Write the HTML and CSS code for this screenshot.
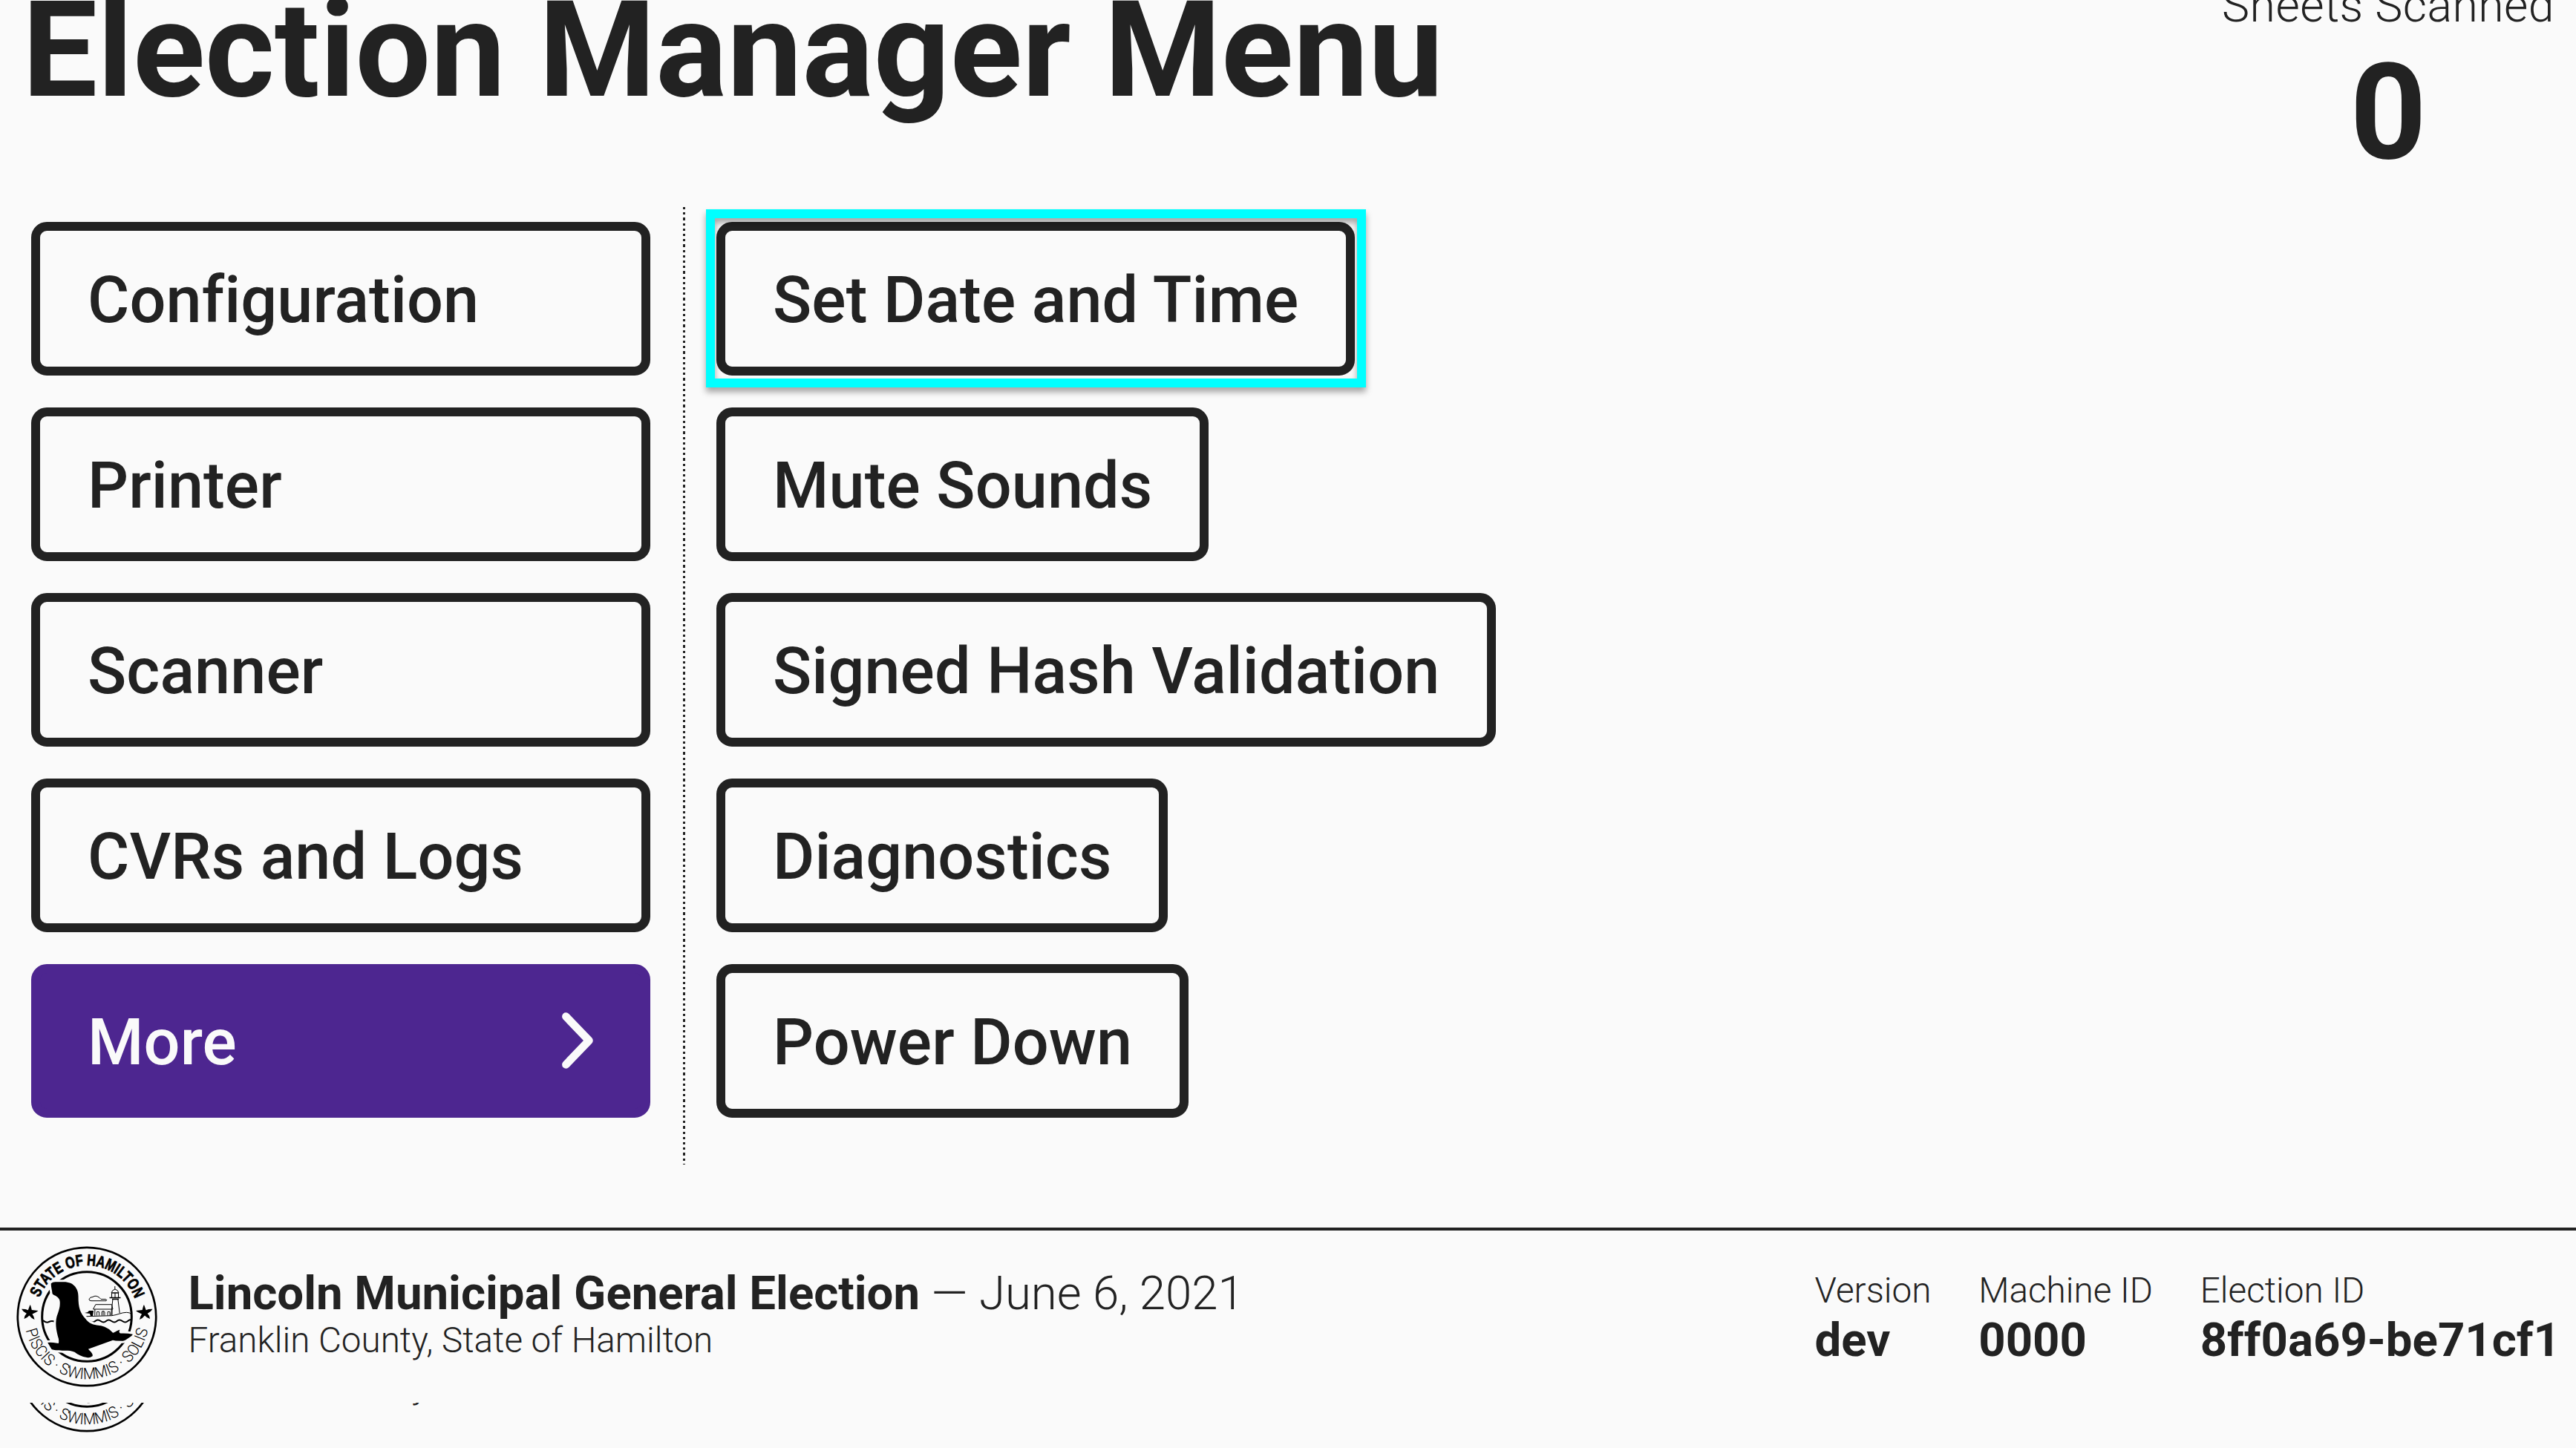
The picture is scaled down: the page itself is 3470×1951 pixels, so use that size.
FILE: index.html
```html
<!DOCTYPE html>
<html lang="en">
<head>
<meta charset="utf-8">
<title>Election Manager Menu</title>
<link rel="stylesheet" href="styles.css">
</head>
<body>
<svg class="defs" width="0" height="0" aria-hidden="true">
  <symbol id="seal" viewBox="0 0 190 190">
    <defs>
      <path id="arc-top" d="M26 95a69 69 0 0 1 138 0"/>
      <path id="arc-bottom" d="M10.700 95a84.300 84.300 0 0 0 168.600 0"/>
    </defs>
    <g fill="none" stroke="#000">
      <circle cx="95" cy="95" r="93.200" stroke-width="2.700"/>
      <circle cx="95" cy="95" r="60.300" stroke-width="3"/>
      <path stroke-width="2" d="M36 100q4 4 8 2t8 0 8 0M90 100q5-2 9 1t7.300 0 7.300 0 7.300 0 7.300 0 7.300 0 7.300 0 7.300 0 5-1"/>
      <path stroke-width="1" d="M91 95l8-.500 29.500-.800c8-1 13-4.400 20-4.400q4 0 7 2.400M98 71.500q1-3 5-3 4-3 9 1l2 2h6q3 1 1 2.200h-20q-3 0-3-2.200zM103.500 85l3.300-6.300h21.700l1.500 6.300zM105.800 85v8.700M129 85v8.700M130 71l-2.500 22M136.800 71l2.400 19.300M128.500 69v-6h9v6M133 69v-6M128 63q1-4 5-5 4 1 5 5zM132.800 58v-4"/>
      <path stroke-width="1.500" d="M125.500 69.600h15M129 71.500h9"/>
      <path stroke-width=".9" d="M108.500 93.500v-5h3v5M115 93.500v-5q2-2 4 0v5M117 93.500v-6M123 93.500v-5h3v5"/>
      <path fill="#000" stroke="none" d="M92 90l4-1 2-2 6 0-1 7h-3l-1-3z"/>
    </g>
    <path stroke="#fafafa" stroke-width="6" paint-order="stroke" d="M46.800 50.300Q49 48 53.500 48.300L60 48.300C70 47.500 75 50 78.500 53.700 82 58 83.500 62 83.500 68 83.500 83 86 90 93.500 98.300 99 106 108 106.500 111.800 107 118 107.500 125 111 130 116.700 134 116 136 113 139.500 112.700 138 115 138.500 117 140.500 117.500Q149 117 156.800 118.700C156 121 153 122.500 152 123.300 148 126 146 127.700 143.500 127.700L134 127.500 130 126.700 96.800 138.700C99 141 104 145 102.500 148.300Q99 151 95 150C88 149 83 146 78.500 142.700 71 139.500 65 141.500 55 140.300 50 140 47 139.500 46.800 137.700L42.200 130Q45 129 56.800 131 58 127 55.800 121C53.500 112 53 106 53.500 101 54 93 57 90 58.500 81 59 75 59 72 55.800 69 52 65.500 49 66 48.500 63.700 48 58 46.500 55 46.800 50.300z"/>
    <path id="star" d="M18.500 79Q19.500 80 20.800 86L29.500 87Q27 89.500 21.500 91.500 24 95 24.500 99 21 98 17.500 93.500 15 96.500 10.500 98 10.500 94 13.800 90.800 9 88.500 7 84.800 12 84.500 15.800 86.200z"/>
    <use href="#star" transform="matrix(-1 0 0 1 190.500 0)"/>
    <text class="seal-name" textLength="166" lengthAdjust="spacingAndGlyphs"><textPath href="#arc-top" startOffset="26">STATE OF HAMILTON</textPath></text>
    <text class="seal-motto" textLength="228" lengthAdjust="spacingAndGlyphs"><textPath href="#arc-bottom" startOffset="18.500">PISCIS · SWIMMIS · SOLIS</textPath></text>
  </symbol>
</svg>
<div class="screen">
  <header class="header">
    <h1 class="title">Election Manager Menu</h1>
    <div class="count"><span class="count-label">Sheets Scanned</span><strong class="count-value">0</strong></div>
  </header>
  <main class="main">
    <nav class="tabs">
      <button class="btn">Configuration</button>
      <button class="btn">Printer</button>
      <button class="btn">Scanner</button>
      <button class="btn">CVRs and Logs</button>
      <button class="btn btn-active">More
        <svg class="chevron" viewBox="0 0 42 76"><path d="M5.400 5.600l31 32.400-31 32.400"/></svg>
      </button>
    </nav>
    <section class="actions">
      <button class="btn btn-focus">Set Date and Time</button>
      <button class="btn">Mute Sounds</button>
      <button class="btn">Signed Hash Validation</button>
      <button class="btn">Diagnostics</button>
      <button class="btn">Power Down</button>
    </section>
  </main>
  <footer class="footer">
    <svg class="seal"><use href="#seal"/></svg>
    <div class="election">
      <div class="election-name"><strong>Lincoln Municipal General Election</strong> — June 6, 2021</div>
      <div class="election-place">Franklin County, State of Hamilton</div>
    </div>
    <dl class="meta">
      <div><dt>Version</dt><dd>dev</dd></div>
      <div><dt>Machine ID</dt><dd>0000</dd></div>
      <div><dt>Election ID</dt><dd>8ff0a69-be71cf1</dd></div>
    </dl>
  </footer>
  <div class="overflow" aria-hidden="true">
    <div class="overflow-row">
      <svg class="seal"><use href="#seal"/></svg>
      <div class="election">
        <div class="election-name">&nbsp;</div>
        <div class="election-place">Franklin County, State of Hamilton</div>
      </div>
    </div>
  </div>
</div>
</body>
</html>
```
FILE: styles.css
```css
* { box-sizing: border-box; }
body { margin: 0; background: #fafafa; color: #222; font-family: Roboto, "Liberation Sans", sans-serif; font-weight: 300; }
.defs { position: absolute; }
.screen { width: 3470px; height: 1951px; overflow: hidden; display: flex; flex-direction: column; }
.header { height: 279px; display: flex; justify-content: space-between; padding: 0 29px 0 30px; }
.title { margin: -39px 0 0; font-size: 180px; line-height: 214px; font-weight: 700; white-space: nowrap; }
.count { display: flex; flex-direction: column; align-items: center; margin-top: -30px; }
.count-label { font-size: 62.500px; line-height: 76px; letter-spacing: .45px; }
.count-value { font-size: 180px; line-height: 212px; font-weight: 700; }
.main { height: 1375px; display: flex; }
.tabs, .actions { display: flex; flex-direction: column; gap: 43px; padding-top: 20px; height: 1290px; }
.tabs { width: 923px; padding-left: 42px; padding-right: 47px; background: repeating-linear-gradient(#222 0 3.300px, transparent 3.300px 7.200px) right top / 3px 100% no-repeat; }
.actions { padding-left: 42px; align-items: flex-start; }
.btn { flex: none; display: flex; align-items: center; justify-content: space-between; height: 207px; padding: 4px 63.500px 0 64px; border: 12.500px solid #222; border-radius: 21px; background: #fafafa; color: #222; font: 500 86.300px/100px Roboto, sans-serif; letter-spacing: .1px; white-space: nowrap; }
.btn-active { padding-right: 65px; background: #4d2690; border-color: #4d2690; color: #fafafa; }
.btn-focus { position: relative; }
.btn-focus::after { content: ""; position: absolute; inset: -29px -27.500px -28px -26px; border: 12px solid #0ff; filter: drop-shadow(0 6px 4px rgba(0,0,0,.35)); }
.chevron { width: 42px; height: 76px; margin-bottom: 6px; fill: none; stroke: currentColor; stroke-width: 10.700; stroke-linecap: round; stroke-linejoin: round; }
.footer { height: 236px; border-top: 4px solid #222; padding: 21px 21px 0 21.500px; display: flex; align-items: flex-start; }
.seal { width: 190px; height: 190px; flex: none; margin-right: 42px; }
.seal-name { font: 700 21.500px "Liberation Sans", sans-serif; stroke: #000; stroke-width: .8; }
.seal-motto { font: 300 21.500px Roboto, sans-serif; }
.election { padding-top: 28px; white-space: nowrap; }
.election-name { font-size: 63.500px; line-height: 72px; }
.election-name strong { font-weight: 700; }
.election-place { font-size: 47.600px; line-height: 54px; }
.meta { display: flex; gap: 63.700px; margin: 30px 0 0 auto; white-space: nowrap; }
.meta dt { font-size: 47.700px; line-height: 60px; }
.meta dd { margin: 0; font-size: 63.500px; line-height: 73px; font-weight: 700; }
.overflow { height: 61px; overflow: hidden; }
.overflow-row { display: flex; align-items: flex-start; margin-top: -150px; padding-left: 21.500px; }
```
